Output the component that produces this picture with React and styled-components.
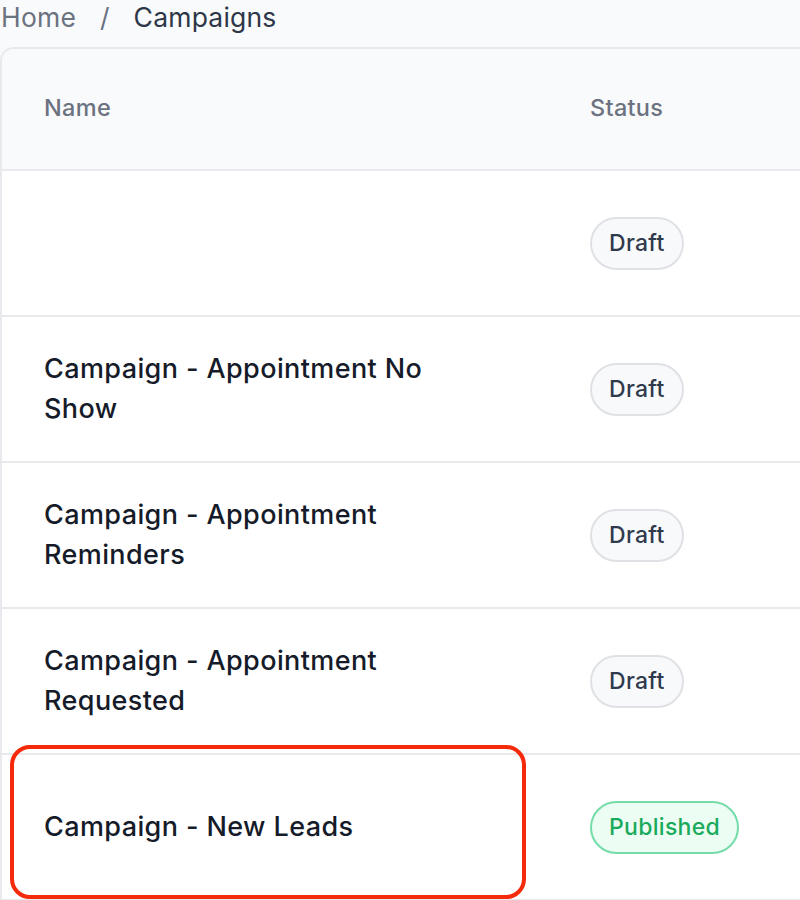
import styled, { createGlobalStyle } from "styled-components"

const GlobalStyle = createGlobalStyle`
  html, body {
    margin: 0;
    padding: 0;
    background: #f9fafb;
    overflow: hidden;
  }
  body {
    font-family: Inter, "Noto Sans", "Liberation Sans", sans-serif;
    -webkit-font-smoothing: antialiased;
  }
`

const Page = styled.div`
  width: 800px;
  height: 900px;
  overflow: hidden;
`

const Breadcrumb = styled.nav`
  display: flex;
  align-items: center;
  gap: 24px;
  height: 34px;
  padding-left: 1px;
  margin-bottom: 13px;
  font-size: 26.5px;
  line-height: 34px;
`

const Crumb = styled.span`
  color: ${({ $current }) => ($current ? "#2d3748" : "#6b7280")};
  letter-spacing: 0.2px;
`

const Separator = styled.span`
  color: #6b7280;
`

const Card = styled.div`
  width: 840px;
  background: #ffffff;
  border: 2px solid #e8e9ec;
  border-right: none;
  border-radius: 14px 0 0 0;
`

const Row = styled.div`
  position: relative;
  display: grid;
  grid-template-columns: 546px 1fr;
  align-items: center;
  height: ${({ $header }) => ($header ? "120px" : "144px")};
  background: ${({ $header }) => ($header ? "#f9fafb" : "#ffffff")};
  border-bottom: 2px solid #e8e9ec;
  border-top-left-radius: ${({ $header }) => ($header ? "12px" : "0")};
`

const HeadCell = styled.div`
  padding-left: 42px;
  font-size: 23.5px;
  letter-spacing: 0.3px;
  font-weight: 500;
  color: #6b7280;
  margin-top: -3px;
`

const NameCell = styled.div`
  padding-left: 42px;
  max-width: 440px;
  font-size: 27px;
  letter-spacing: 0.4px;
  line-height: 40px;
  font-weight: 500;
  color: #151b29;
`

const StatusCell = styled.div`
  padding-left: 42px;
  display: flex;
`

const Badge = styled.span`
  display: inline-flex;
  align-items: center;
  height: 49px;
  padding: 0 17px;
  border-radius: 999px;
  font-size: 23px;
  letter-spacing: 0.3px;
  font-weight: 500;
  border: 2px solid ${({ $published }) => ($published ? "#74dca8" : "#dfe1e5")};
  background: ${({ $published }) => ($published ? "#ecfdf3" : "#f8f9fb")};
  color: ${({ $published }) => ($published ? "#1aaa5c" : "#303a4d")};
`

const Highlight = styled.div`
  position: absolute;
  left: 8px;
  top: -10px;
  width: 508px;
  height: 146px;
  border: 4px solid #f52a0a;
  border-radius: 20px;
  pointer-events: none;
`

const campaigns = [
  { name: "", status: "Draft" },
  { name: "Campaign - Appointment No Show", status: "Draft" },
  { name: "Campaign - Appointment Reminders", status: "Draft" },
  { name: "Campaign - Appointment Requested", status: "Draft" },
  { name: "Campaign - New Leads", status: "Published", highlight: true },
]

const App = () => {
  return (
    <Page>
      <GlobalStyle />
      <Breadcrumb>
        <Crumb>Home</Crumb>
        <Separator>/</Separator>
        <Crumb $current>Campaigns</Crumb>
      </Breadcrumb>
      <Card>
        <Row $header>
          <HeadCell>Name</HeadCell>
          <HeadCell>Status</HeadCell>
        </Row>
        {campaigns.map((c, i) => (
          <Row key={i}>
            {c.highlight && <Highlight />}
            <NameCell>{c.name}</NameCell>
            <StatusCell>
              <Badge $published={c.status === "Published"}>{c.status}</Badge>
            </StatusCell>
          </Row>
        ))}
      </Card>
    </Page>
  )
}

export default App
